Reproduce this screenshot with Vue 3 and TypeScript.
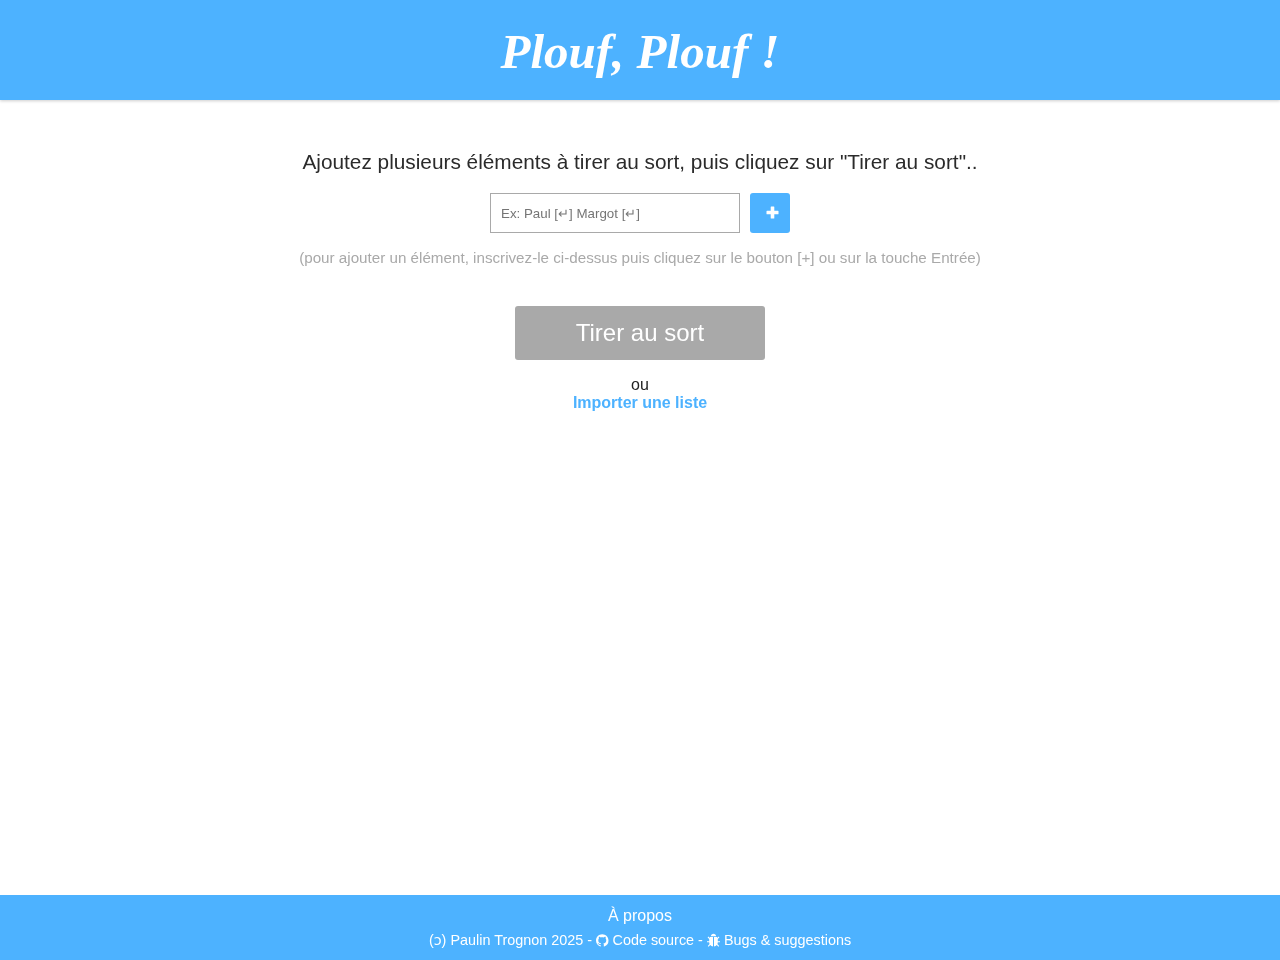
<script setup lang="ts">
const title = 'Plouf, Plouf !'
</script>

<template>
  <div class="page">
    <header class="top">
      <h1 class="logo">{{ title }}</h1>
    </header>
    <main class="main">
      <p class="lead">Ajoutez plusieurs éléments à tirer au sort, puis cliquez sur "Tirer au sort"..</p>
      <form class="add" @submit.prevent>
        <input class="field" type="text" placeholder="Ex: Paul [↵] Margot [↵]" />
        <button class="plus" type="submit" aria-label="Ajouter">
          <svg width="13" height="13" viewBox="0 0 13 13"><path d="M5.200 .5h2.600a.5.5 0 0 1 .5.5V4.700H12a.5.5 0 0 1 .5.5v2.600a.5.5 0 0 1-.5.5H8.300V12a.5.5 0 0 1-.5.5H5.200a.5.5 0 0 1-.5-.5V8.300H1a.5.5 0 0 1-.5-.5V5.200a.5.5 0 0 1 .5-.5h3.700V1a.5.5 0 0 1 .5-.5z" fill="#fff"/></svg>
        </button>
      </form>
      <p class="hint">(pour ajouter un élément, inscrivez-le ci-dessus puis cliquez sur le bouton [+] ou sur la touche Entrée)</p>
      <button class="draw" type="button">Tirer au sort</button>
      <div class="alt">
        <div>ou</div>
        <a class="import" href="#">Importer une liste</a>
      </div>
    </main>
    <footer class="bottom">
      <a class="about" href="#">À propos</a>
      <div class="credits">(<span class="anti">ɔ</span>) Paulin Trognon 2025 - <a href="#"><svg class="ico" width="12.500" height="13" viewBox="0 0 16 16"><path fill="#fff" d="M8 0C3.580 0 0 3.580 0 8c0 3.540 2.290 6.530 5.470 7.590.4.070.55-.17.55-.38 0-.19-.01-.82-.01-1.490-2.010.37-2.530-.49-2.690-.94-.09-.23-.48-.94-.82-1.130-.28-.15-.68-.52-.01-.53.63-.01 1.080.58 1.230.82.72 1.210 1.870.87 2.330.66.07-.52.28-.87.51-1.070-1.780-.2-3.640-.89-3.640-3.950 0-.87.31-1.590.82-2.150-.08-.2-.36-1.020.08-2.120 0 0 .67-.21 2.200.82.64-.18 1.320-.27 2-.27s1.360.09 2 .27c1.530-1.040 2.200-.82 2.200-.82.44 1.100.16 1.920.08 2.120.51.56.82 1.270.82 2.150 0 3.070-1.870 3.750-3.650 3.950.29.25.54.73.54 1.480 0 1.070-.01 1.930-.01 2.200 0 .21.15.46.55.38A8 8 0 0 0 16 8c0-4.420-3.580-8-8-8z"/></svg> Code source</a> - <a href="#"><svg class="ico bug" width="13" height="14" viewBox="0 0 13 14"><path fill="#fff" d="M3.800 3.200C4 1.700 5.100.7 6.500.7s2.500 1 2.700 2.500zM3 4h3v9.600C4.800 13.500 3.900 13 3.200 12.100L1.600 13.800.8 13l1.800-1.900c-.3-.6-.4-1.200-.4-1.900H0V8.200h2.200V6.100L.6 4.400l.8-.8L3 5.100zM7 4h3v1.100l1.600-1.500.8.8-1.600 1.700v2.100H13v1h-2.200c0 .7-.1 1.300-.4 1.900l1.800 1.900-.8.800-1.600-1.700c-.7.900-1.600 1.400-2.800 1.500z"/></svg> Bugs &amp; suggestions</a></div>
    </footer>
  </div>
</template>

<style>
body { margin: 0; }
</style>

<style scoped>
.page {
  min-height: 960px;
  display: flex;
  flex-direction: column;
  font-family: "Liberation Sans", Arial, sans-serif;
  color: #222;
  will-change: transform;
}
.top {
  height: 100px;
  background: #4db2ff;
  box-shadow: 0 1px 3px rgba(0, 0, 0, 0.2);
  display: flex;
  align-items: center;
  justify-content: center;
}
.logo {
  margin: 4px 0 0;
  font-family: cursive;
  font-style: italic;
  font-weight: 700;
  font-size: 49px;
  line-height: 96px;
  color: #fff;
}
.main {
  flex: 1;
  display: flex;
  flex-direction: column;
  align-items: center;
  padding-top: 50px;
}
.lead {
  margin: 0;
  font-size: 20.8px;
  line-height: 24px;
  color: #2b2b2b;
}
.add {
  display: flex;
  gap: 10px;
  margin-top: 19px;
}
.field {
  box-sizing: border-box;
  width: 250px;
  height: 40px;
  padding: 0 10px;
  border: 1px solid #a9a9a9;
  border-radius: 0;
  font: 13.33px "Liberation Sans", Arial, sans-serif;
  outline: none;
}
.field::placeholder {
  color: #757575;
  opacity: 1;
}
.plus {
  width: 40px;
  height: 40px;
  padding: 0 0 2px 4px;
  border: 0;
  border-radius: 3px;
  background: #4db2ff;
  display: flex;
  align-items: center;
  justify-content: center;
}
.hint {
  margin: 15px 0 0;
  font-size: 15.2px;
  line-height: 20px;
  color: #a9a9a9;
}
.draw {
  margin-top: 38px;
  width: 250px;
  height: 54px;
  border: 0;
  border-radius: 3px;
  background: #a9a9a9;
  color: #fff;
  font: 24px "Liberation Sans", Arial, sans-serif;
}
.alt {
  margin-top: 16px;
  text-align: center;
  font-size: 16px;
  line-height: 18px;
}
.import {
  color: #4db2ff;
  font-weight: 700;
  text-decoration: none;
}
.bottom {
  height: 65px;
  background: #4db2ff;
  color: #fff;
  text-align: center;
  box-sizing: border-box;
  padding-top: 11px;
}
.bottom a {
  color: #fff;
  text-decoration: none;
}
.about {
  display: block;
  font-size: 16px;
  line-height: 20px;
}
.credits {
  margin-top: 6px;
  font-size: 14.4px;
  line-height: 17px;
}
.anti {
  font-family: "DejaVu Sans", sans-serif;
}
.ico {
  vertical-align: -2px;
}
</style>
